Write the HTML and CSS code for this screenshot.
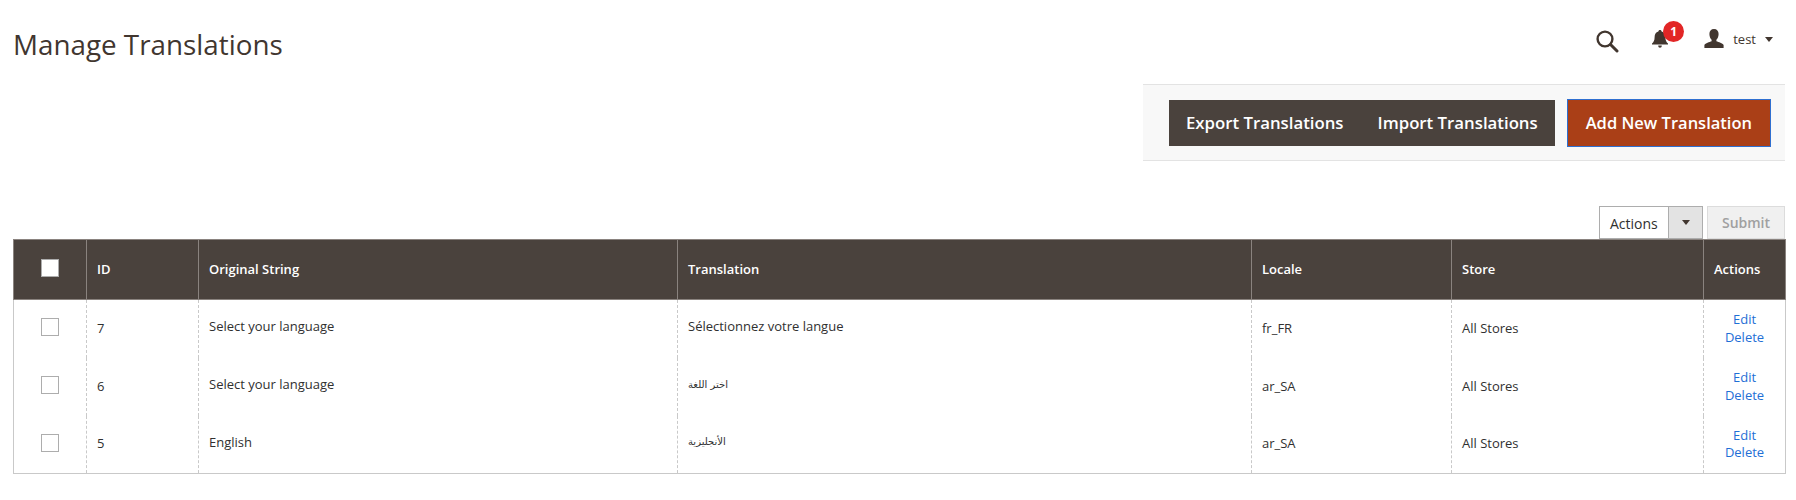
FILE: index.html
```html
<!DOCTYPE html>
<html lang="en">
<head>
    <meta charset="UTF-8">
    <title>Manage Translations</title>
    <link rel="stylesheet" href="styles.css">
</head>
<body>
    <header class="page-header">
        <h1 class="page-title">Manage Translations</h1>
        <div class="admin-user">
            <svg class="icon-search" width="24" height="24" viewBox="0 0 24 24">
                <circle cx="10" cy="10" r="7.4" fill="none" stroke="#41362f" stroke-width="2.4"/>
                <path d="M15.5 15.5 L22 22" stroke="#41362f" stroke-width="3" stroke-linecap="round"/>
            </svg>
            <div class="notifications">
                <svg width="18" height="20" viewBox="0 0 18 20">
                    <path d="M9 1 C10 1 10.6 1.7 10.6 2.5 C13.2 3.2 14.4 5.4 14.4 8.2 C14.4 11.5 15.4 13 17 14.6 L17 15.6 L1 15.6 L1 14.6 C2.6 13 3.6 11.5 3.6 8.2 C3.6 5.4 4.8 3.2 7.4 2.5 C7.4 1.7 8 1 9 1 Z M7.2 16.6 L10.8 16.6 C10.8 18 10 18.8 9 18.8 C8 18.8 7.2 18 7.2 16.6 Z" fill="#41362f"/>
                </svg>
                <span class="badge">1</span>
            </div>
            <div class="user">
                <svg width="20" height="20" viewBox="0 0 20 20">
                    <path d="M10 0 C13 0 14.6 2 14.6 5 C14.6 7.6 13.6 9.6 12.4 10.8 L12.4 12.2 C14.6 13.2 18.6 13.8 19.6 16 L19.6 19 L0.4 19 L0.4 16 C1.4 13.8 5.4 13.2 7.6 12.2 L7.6 10.8 C6.4 9.6 5.4 7.6 5.4 5 C5.4 2 7 0 10 0 Z" fill="#41362f"/>
                </svg>
                <span class="user-name">test</span>
                <span class="caret"></span>
            </div>
        </div>
    </header>

    <div class="page-actions">
        <div class="action-group">
            <button class="btn">Export Translations</button>
            <button class="btn">Import Translations</button>
        </div>
        <button class="btn btn-primary">Add New Translation</button>
    </div>

    <div class="mass-actions">
        <div class="select-box">
            <span class="select-label">Actions</span>
            <span class="select-arrow"><span class="caret"></span></span>
        </div>
        <button class="btn-submit">Submit</button>
    </div>

    <table class="grid">
        <thead>
            <tr>
                <th class="col-check"><span class="checkbox"></span></th>
                <th class="col-id">ID</th>
                <th class="col-string">Original String</th>
                <th class="col-translation">Translation</th>
                <th class="col-locale">Locale</th>
                <th class="col-store">Store</th>
                <th class="col-actions">Actions</th>
            </tr>
        </thead>
        <tbody>
            <tr>
                <td class="col-check"><span class="checkbox"></span></td>
                <td>7</td>
                <td class="raised">Select your language</td>
                <td class="raised">Sélectionnez votre langue</td>
                <td>fr_FR</td>
                <td>All Stores</td>
                <td class="links"><a href="#">Edit</a><a href="#">Delete</a></td>
            </tr>
            <tr>
                <td class="col-check"><span class="checkbox"></span></td>
                <td>6</td>
                <td class="raised">Select your language</td>
                <td class="raised arabic">اختر اللغة</td>
                <td>ar_SA</td>
                <td>All Stores</td>
                <td class="links"><a href="#">Edit</a><a href="#">Delete</a></td>
            </tr>
            <tr>
                <td class="col-check"><span class="checkbox"></span></td>
                <td>5</td>
                <td class="raised">English</td>
                <td class="raised arabic">الأنجليزية</td>
                <td>ar_SA</td>
                <td>All Stores</td>
                <td class="links"><a href="#">Edit</a><a href="#">Delete</a></td>
            </tr>
        </tbody>
    </table>
</body>
</html>
```

FILE: styles.css
```css
body {
    font-family: "Open Sans", sans-serif;
    font-size: 13px;
    color: #303030;
    background-color: #fff;
    margin: 0;
    padding: 0 11px 0 13px;
}

.page-header {
    display: flex;
    align-items: center;
    justify-content: space-between;
    height: 84px;
}

.page-title {
    margin: 0 0 -3px;
    font-size: 27.8px;
    font-weight: 400;
    color: #41362f;
}

.admin-user {
    display: flex;
    align-items: center;
    margin-top: -6px;
    padding-right: 12px;
}

.icon-search {
    margin-top: 4px;
    margin-right: 32px;
}

.notifications {
    position: relative;
    display: flex;
    margin-right: 35px;
}

.badge {
    position: absolute;
    top: -8px;
    left: 12px;
    width: 21px;
    height: 21px;
    border-radius: 50%;
    background-color: #e22626;
    color: #fff;
    font-size: 12px;
    font-weight: 700;
    line-height: 21px;
    text-align: center;
}

.user {
    display: flex;
    align-items: center;
}

.user-name {
    margin: 0 9px 0 9px;
    font-size: 13px;
    color: #41362f;
}

.caret {
    display: inline-block;
    border-top: 5px solid #41362f;
    border-left: 4.5px solid transparent;
    border-right: 4.5px solid transparent;
}

.page-actions {
    display: flex;
    justify-content: flex-end;
    align-items: center;
    gap: 12px;
    width: 642px;
    height: 77px;
    box-sizing: border-box;
    margin-left: auto;
    padding-right: 14px;
    background-color: #f8f8f8;
    border-top: 1px solid #e3e3e3;
    border-bottom: 1px solid #e3e3e3;
}

.action-group {
    display: flex;
    background-color: #514943;
}

.btn {
    height: 46px;
    padding: 0 17px;
    font-family: "Open Sans", sans-serif;
    font-size: 16.8px;
    font-weight: 600;
    color: #fff;
    background-color: #4a423d;
    border: none;
}

.btn-primary {
    height: 48px;
    padding: 0 18px;
    font-size: 16.5px;
    background-color: #aa3f17;
    border: 1px solid #2f6fd0;
}

.mass-actions {
    display: flex;
    justify-content: flex-end;
    gap: 4px;
    margin-top: 45px;
}

.select-box {
    display: flex;
    width: 104px;
    height: 33px;
    box-sizing: border-box;
    background-color: #fff;
    border: 1px solid #adadad;
    font-size: 14px;
    color: #303030;
}

.select-label {
    flex: 1;
    padding-left: 10px;
    line-height: 33px;
}

.select-arrow {
    display: flex;
    align-items: center;
    justify-content: center;
    width: 33px;
    background-color: #e3e3e3;
    border-left: 1px solid #adadad;
}

.btn-submit {
    width: 78px;
    height: 33px;
    font-family: "Open Sans", sans-serif;
    font-size: 14px;
    font-weight: 600;
    color: #a0a0a0;
    background-color: #f0f0f0;
    border: 1px solid #dcdcdc;
}

.grid {
    width: 100%;
    table-layout: fixed;
    border-collapse: collapse;
    border: 1px solid #c9c9c9;
}

.grid th,
.grid td {
    box-sizing: border-box;
}

.grid th {
    height: 60px;
    padding: 0 10px 1px;
    text-align: left;
    font-weight: 600;
    color: #fff;
    background-color: #4a423d;
    border: 1px solid #8a837f;
}

.grid td {
    height: 58px;
    padding: 0 10px 2px;
    border-left: 1px dashed #c9c9c9;
    border-right: 1px dashed #c9c9c9;
}

.grid .col-check {
    width: 73px;
    padding: 0 0 5px;
    text-align: center;
    border-left: 1px solid #c9c9c9;
}

.grid th.col-check {
    padding-bottom: 4px;
    border-color: #8a837f;
}

.col-id {
    width: 112px;
}

.col-string {
    width: 479px;
}

.col-translation {
    width: 574px;
}

.col-locale {
    width: 200px;
}

.col-store {
    width: 252px;
}

.col-actions {
    width: 82px;
}

.checkbox {
    display: inline-block;
    width: 16px;
    height: 16px;
    vertical-align: middle;
    background-color: #fff;
    border: 1px solid #adadad;
}

.grid .raised {
    padding-bottom: 5px;
}

.arabic {
    font-family: "DejaVu Sans", sans-serif;
    font-size: 10px;
}

.grid .links {
    padding-bottom: 0;
    text-align: center;
    line-height: 17.5px;
}

.links a {
    display: block;
    color: #1f6fd6;
    text-decoration: none;
}
```
